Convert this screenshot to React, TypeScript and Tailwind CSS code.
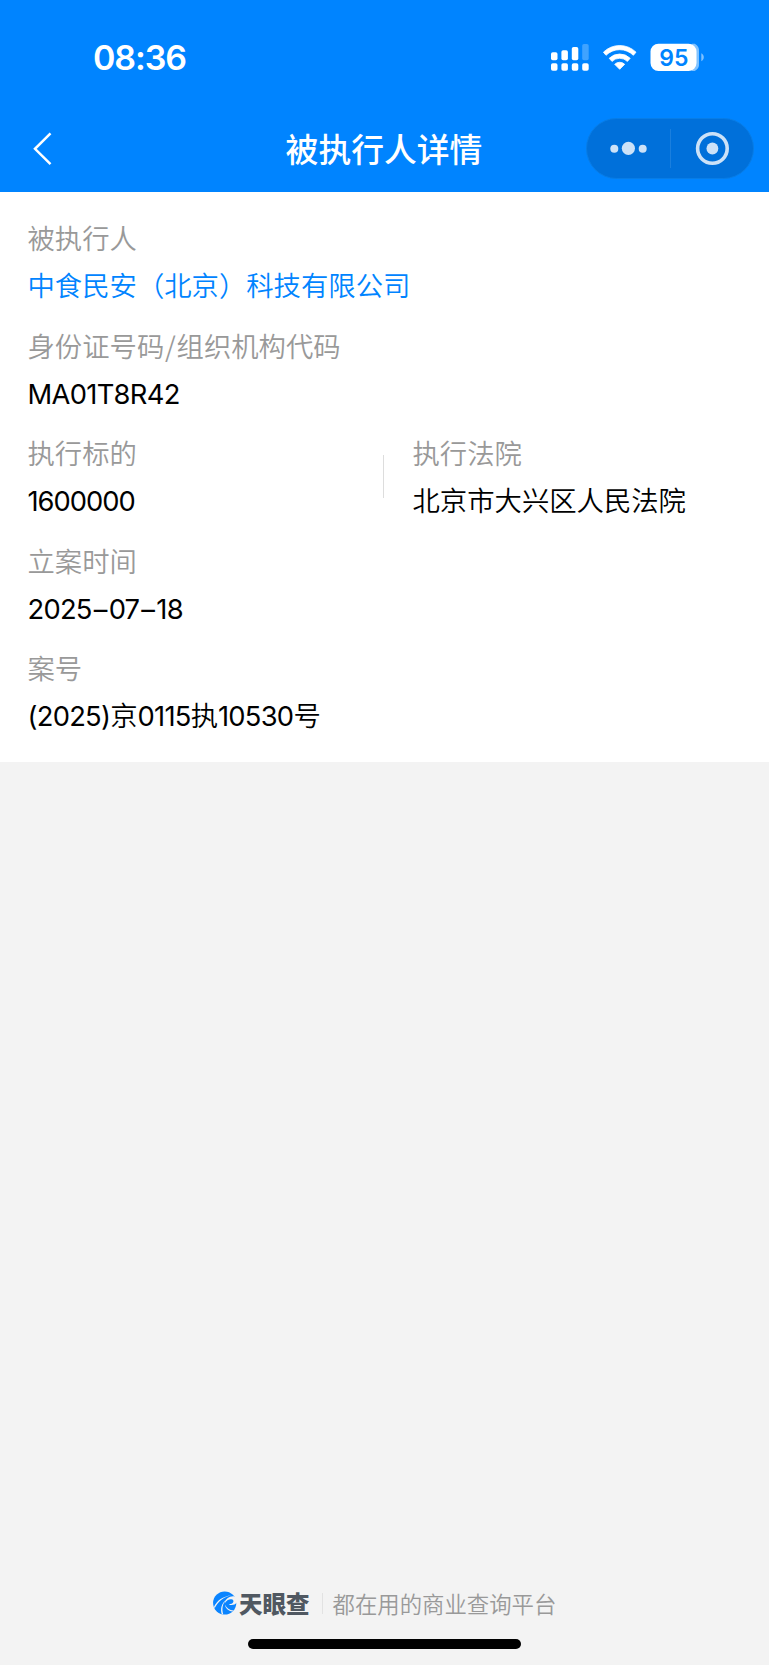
import type { ReactNode } from "react";

function StatusBar() {
  return (
    <div className="flex h-[116px] items-start pl-[93px] pr-[64px]">
      <span className="mt-[37px] font-['Inter'] text-[34px] font-semibold leading-[42px] tracking-[-1.1px]">08:36</span>
      <svg className="ml-auto mt-[40px]" width="160" height="36" viewBox="0 0 160 36" fill="#fff">
        <rect x="6" y="12.2" width="6.5" height="8" rx="1.8" />
        <rect x="16.4" y="10.3" width="6.5" height="9.9" rx="1.8" />
        <rect x="26.8" y="7" width="6.5" height="13.2" rx="1.8" />
        <rect x="37.2" y="4" width="6.5" height="16.2" rx="1.8" opacity="0.25" />
        <rect x="6" y="23.2" width="6.5" height="7.6" rx="1.8" />
        <rect x="16.4" y="23.2" width="6.5" height="7.6" rx="1.8" />
        <rect x="26.8" y="23.2" width="6.5" height="7.6" rx="1.8" />
        <rect x="37.2" y="23.2" width="6.5" height="7.6" rx="1.8" />
        <path d="M58.4 12.2a23.2 23.2 0 0 1 32.6 0l-2.6 3.1a19.5 19.5 0 0 0-27.4 0z" stroke="#fff" strokeWidth="0.8" strokeLinejoin="round" />
        <path d="M64.2 18.3a15 15 0 0 1 21 0l-2.8 3.1a11 11 0 0 0-15.4 0z" stroke="#fff" strokeWidth="0.8" strokeLinejoin="round" />
        <path d="M69.7 24.3a7.2 7.2 0 0 1 10 0l-5 5z" stroke="#fff" strokeWidth="0.8" strokeLinejoin="round" />
        <path d="M147 3.7h2.8a8 8 0 0 1 4.2 7.8v11.7a8 8 0 0 1-4.2 7.8H147z" opacity="0.5" />
        <rect x="105.5" y="3.7" width="46" height="27.3" rx="8" />
        <path d="M156.3 13.2c3.3 1.6 3.3 6.4 0 8z" opacity="0.5" />
        <text x="128.8" y="25.6" textAnchor="middle" fill="#0084ff" className="font-['Inter'] text-[23px] font-semibold">95</text>
      </svg>
    </div>
  );
}

function NavBar() {
  return (
    <div className="grid h-[75.5px] grid-cols-[1fr_auto_1fr] items-start">
      <svg className="ml-[31px] mt-[15px]" width="22" height="36" viewBox="0 0 22 36" fill="none" stroke="#fff" strokeWidth="2.5">
        <path d="M19.5 2.3 4 17.8l15.5 15.4" />
      </svg>
      <h1 className="-ml-px mt-[8px] text-[32.8px] font-medium leading-[48px]">被执行人详情</h1>
      <div className="mr-[15px] mt-[2px] flex h-[61px] w-[168px] items-center justify-self-end rounded-full border border-[#087de6] bg-[#0070da]">
        <svg width="166" height="59" viewBox="0 0 166 59" fill="#cce2f8">
          <circle cx="27.3" cy="29.8" r="4" />
          <circle cx="41.4" cy="29.3" r="6.6" />
          <circle cx="55.7" cy="29.8" r="4" />
          <path d="M83.5 10v39" stroke="#1a7fde" />
          <circle cx="125.4" cy="29.5" r="14.8" fill="none" stroke="#cce2f8" strokeWidth="3.6" />
          <circle cx="125.4" cy="29.5" r="5.9" />
        </svg>
      </div>
    </div>
  );
}

function Field({ label, link, children }: { label: ReactNode; link?: boolean; children: ReactNode }) {
  return (
    <div className="flex flex-col gap-[9px]">
      <div className="h-[38px] leading-[38px] text-[#999]">{label}</div>
      <div className={link ? "h-[38px] leading-[38px] text-[#0084ff]" : "h-[38px] leading-[38px] text-black"}>{children}</div>
    </div>
  );
}

const num = "font-['Inter'] font-[370] tracking-[-0.75px]";

function Dash() {
  return <span className="mx-[2px]">–</span>;
}

function Logo() {
  return (
    <svg width="24" height="24" viewBox="0 0 24 24">
      <circle cx="11.7" cy="12" r="11.6" fill="#0a84ff" />
      <path d="M20.8 5.2c-4.4-.4-8.400 2.600-9.300 7.300 1.900-3 4.500-4.500 6.900-4.200 1.700.2 2.400 1.300 1.900 2.600-.6 1.400-2.300 2.200-4.600 2.300 2.300 1.600 6 1.100 8.300-1.600V9l-1-2.800z" fill="#f3f3f3" />
      <path d="M1 15.800C4.200 9.200 9.700 5.400 18.500 4.200 10.600 6 5.200 10.200 1.700 17.200z" fill="#f3f3f3" />
      <path d="M8.800 23.200c-1.700-5.400-.4-11 5-15.200C9.500 12.600 8.500 17.600 10.300 23.400z" fill="#f3f3f3" />
      <path d="M12 13.800c.4 3.600 3.300 6.400 7.600 6.600l1-1c-3.900.1-7-2-8.600-5.600z" fill="#f3f3f3" />
    </svg>
  );
}

export default function App() {
  return (
    <div className="flex h-[1665px] w-[769px] flex-col bg-[#f3f3f3] font-['Noto_Sans_CJK_SC',sans-serif]">
      <header className="h-[191.5px] shrink-0 bg-[#0084ff] text-white">
        <StatusBar />
        <NavBar />
      </header>
      <main className="flex h-[570.5px] shrink-0 flex-col gap-[22.5px] bg-white px-[27.5px] pt-[26.5px] text-[27.35px] font-[350]">
        <Field label="被执行人" link>中食民安（北京）科技有限公司</Field>
        <Field label={<>身份证号码<span className="mx-[0.8px]">/</span>组织机构代码</>}><span className="font-['Inter'] font-[370] tracking-[-0.7px]">MA01T8R42</span></Field>
        <div className="grid grid-cols-[355.5px_1px_1fr] items-center">
          <Field label="执行标的"><span className="font-['Inter'] font-[370] tracking-[-1px]">1600000</span></Field>
          <div className="mt-[2px] h-[43px] w-px bg-[#ddd]" />
          <div className="pl-[28.5px]">
            <Field label="执行法院">北京市大兴区人民法院</Field>
          </div>
        </div>
        <Field label="立案时间"><span className={num}>2025<Dash />07<Dash />18</span></Field>
        <Field label="案号">
          <span className={num}>(2025)</span>京<span className={num}>0115</span>执<span className={num}>10530</span>号
        </Field>
      </main>
      <footer className="mt-auto flex h-[79px] flex-col">
        <div className="flex h-[34px] items-center pl-[213px]">
          <Logo />
          <span className="ml-[2px] text-[23.5px] font-black leading-[34px] text-[#505861]">天眼查</span>
          <div className="ml-[12px] h-[21px] w-px bg-[#e2e2e2]" />
          <span className="ml-[10px] text-[22.4px] font-[350] leading-[34px] text-[#999]">都在用的商业查询平台</span>
        </div>
        <div className="ml-[248px] mt-[19px] h-[10px] w-[273px] rounded-full bg-black" />
      </footer>
    </div>
  );
}
